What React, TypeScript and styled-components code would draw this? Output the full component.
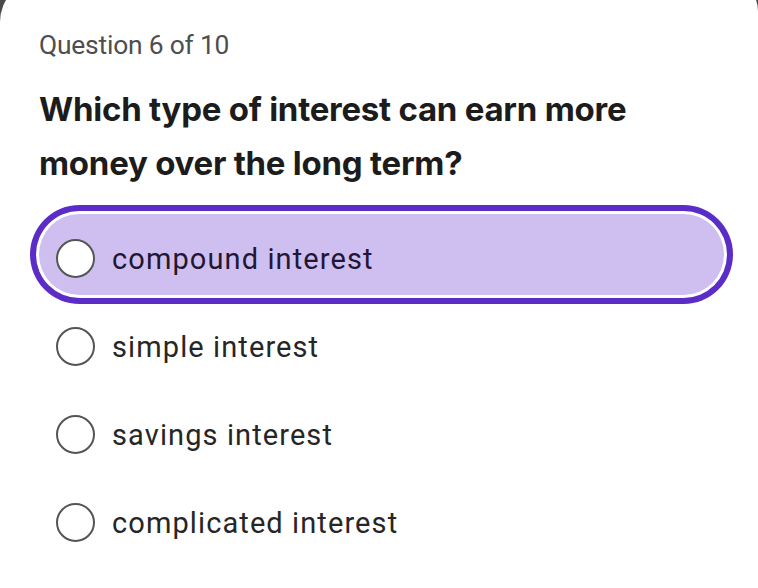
import React, { useState } from "react";
import styled, { createGlobalStyle } from "styled-components";

const Global = createGlobalStyle`
  html, body { margin: 0; padding: 0; background: #4a4a4a; }
  body { font-family: Roboto, "Noto Sans", sans-serif; overflow: hidden; }
  * { box-sizing: border-box; }
`;

const Card = styled.div`
  margin-top: -21px;
  min-height: calc(100vh + 21px);
  background: #ffffff;
  border-radius: 43px 32px 0 0;
  padding: 50px 34px 40px 39px;
`;

const Counter = styled.div`
  font-family: Roboto, sans-serif;
  font-size: 26.4px;
  line-height: 32px;
  color: #4e4e4e;
  letter-spacing: -0.2px;
`;

const Question = styled.h1`
  margin: 21px 0 0 0;
  font-family: Inter, Roboto, sans-serif;
  font-weight: 700;
  font-size: 33px;
  line-height: 54px;
  color: #1c1c1c;
  letter-spacing: -0.25px;
`;

const Options = styled.div`
  margin-top: 24px;
  display: flex;
  flex-direction: column;
  gap: 7px;
`;

const Option = styled.div<{ $selected: boolean }>`
  height: 81px;
  border-radius: 41px;
  display: flex;
  align-items: center;
  gap: 17px;
  padding: 8px 0 0 17px;
  background: ${(p) => (p.$selected ? "#cfbff1" : "transparent")};
  box-shadow: ${(p) =>
    p.$selected ? "0 0 0 3px #ffffff, 0 0 0 9px #5b2cc6" : "none"};
  cursor: pointer;
`;

const Radio = styled.span`
  width: 39px;
  height: 39px;
  border-radius: 50%;
  border: 2px solid #555555;
  background: #ffffff;
  flex: none;
`;

const Label = styled.span<{ $selected: boolean }>`
  font-family: Roboto, sans-serif;
  font-size: 29px;
  letter-spacing: 1.1px;
  color: ${(p) => (p.$selected ? "#1f1733" : "#262626")};
`;

const answers = [
  "compound interest",
  "simple interest",
  "savings interest",
  "complicated interest",
];

export default function App() {
  const [selected, setSelected] = useState(0);
  return (
    <>
      <Global />
      <Card>
        <Counter>Question 6 of 10</Counter>
        <Question>
          Which type of interest can earn more
          <br />
          money over the long term?
        </Question>
        <Options>
          {answers.map((a, i) => (
            <Option
              key={a}
              $selected={selected === i}
              onClick={() => setSelected(i)}
            >
              <Radio />
              <Label $selected={selected === i}>{a}</Label>
            </Option>
          ))}
        </Options>
      </Card>
    </>
  );
}
